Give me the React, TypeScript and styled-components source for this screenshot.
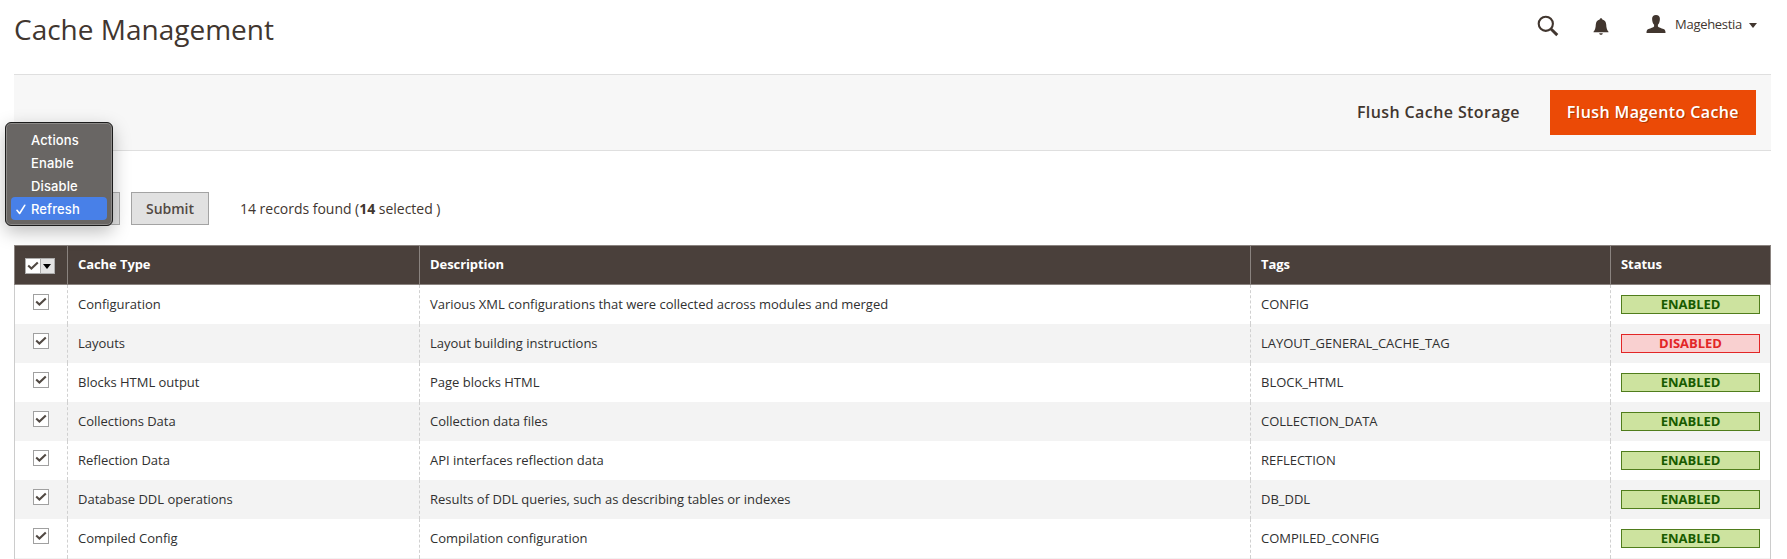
import React from 'react';
import styled, { createGlobalStyle } from 'styled-components';

const GlobalStyle = createGlobalStyle`
  * { box-sizing: border-box; }
  body {
    margin: 0;
    background: #fff;
    color: #41362f;
    font-family: 'Open Sans', 'Noto Sans', sans-serif;
  }
`;

const Page = styled.div`
  height: 559px;
  overflow: hidden;
  padding: 0 16px 0 14px;
`;

const PageHeader = styled.header`
  height: 74px;
  display: flex;
  justify-content: space-between;
  align-items: flex-start;
`;

const Title = styled.h1`
  margin: 10px 0 0;
  font-size: 28px;
  font-weight: 400;
  line-height: 38px;
`;

const HeaderTools = styled.div`
  display: flex;
  align-items: flex-start;
  padding: 14px 14px 0 0;
  color: #41362f;
`;

const SearchIcon = styled.svg`
  margin: 1px 34px 0 0;
`;

const BellIcon = styled.svg`
  margin: 4px 37px 0 0;
`;

const UserIcon = styled.svg`
  margin: 1px 9px 0 0;
`;

const UserName = styled.span`
  font-size: 13px;
  line-height: 20px;
  letter-spacing: -0.3px;
`;

const Caret = styled.svg`
  margin: 9px 0 0 7px;
`;

const ActionBar = styled.div`
  height: 77px;
  display: flex;
  align-items: center;
  justify-content: flex-end;
  padding-right: 15px;
  background: #f7f7f7;
  border-top: 1px solid #dfdfdf;
  border-bottom: 1px solid #dfdfdf;
`;

const ActionButton = styled.button<{ $primary?: boolean }>`
  height: 45px;
  padding: 0 17px 2px;
  margin-left: 13px;
  border: 0;
  font: 600 16px/22px 'Open Sans', sans-serif;
  letter-spacing: 0.4px;
  white-space: nowrap;
  color: ${(p) => (p.$primary ? '#fff' : '#41362f')};
  background: ${(p) => (p.$primary ? '#eb4a06' : 'transparent')};
  text-shadow: ${(p) => (p.$primary ? '1px 1px 0 rgba(0, 0, 0, 0.25)' : 'none')};
`;

const MassActions = styled.div`
  position: relative;
  display: flex;
  align-items: center;
  height: 33px;
  margin: 41px 0 20px;
`;

const SelectBox = styled.div`
  width: 106px;
  height: 33px;
  background: #e1e1e1;
  border: 1px solid #adadad;
`;

const SubmitButton = styled.button`
  width: 78px;
  height: 33px;
  margin-left: 11px;
  padding: 0;
  border: 1px solid #a3a3a3;
  background: #e1e1e1;
  color: #514943;
  font: 600 14px/20px 'Open Sans', sans-serif;
`;

const Records = styled.span`
  margin-left: 31px;
  font-size: 14px;
  line-height: 20px;
  letter-spacing: -0.02px;
`;

const Menu = styled.ul`
  position: absolute;
  z-index: 2;
  left: -9px;
  top: -70px;
  width: 108px;
  height: 104px;
  margin: 0;
  padding: 5px 5px;
  list-style: none;
  background: #696664;
  border: 1px solid #1c1c1c;
  border-radius: 6px;
  box-shadow: inset 0 0 0 1px #8c8a88, 0 6px 18px rgba(0, 0, 0, 0.26);
`;

const MenuItem = styled.li<{ $selected?: boolean }>`
  display: flex;
  align-items: center;
  height: 23px;
  padding: 1px 0 0 5px;
  border-radius: 4px;
  background: ${(p) => (p.$selected ? '#4880e8' : 'transparent')};
  color: #fff;
  font: 500 13px/24px Inter, sans-serif;
  letter-spacing: 0.12px;
`;

const MenuMark = styled.span`
  display: flex;
  width: 15px;
`;

const Grid = styled.div`
  border-left: 1px solid #ccc;
  border-right: 1px solid #ccc;
`;

const columns = '53px 352px 831px 360px 1fr';

const HeadRow = styled.div`
  display: grid;
  grid-template-columns: ${columns};
  height: 40px;
  margin: 0 -1px;
  padding: 0;
  background: #4a403b;
  border: 1px solid #8a837f;
`;

const HeadCell = styled.div`
  display: flex;
  align-items: center;
  padding: 0 0 2px 10px;
  border-right: 1px solid #8a837f;
  color: #fff;
  font-size: 13px;
  font-weight: 700;
  letter-spacing: -0.08px;
  &:last-child { border-right: 0; }
`;

const Row = styled.div<{ $odd: boolean }>`
  display: grid;
  grid-template-columns: ${columns};
  height: 39px;
  background: ${(p) => (p.$odd ? '#f3f3f3' : '#fff')};
`;

const Cell = styled.div`
  display: flex;
  align-items: center;
  padding: 0 10px 2px;
  border-right: 1px dashed #d0d0d0;
  color: #303030;
  font-size: 13px;
  white-space: nowrap;
  letter-spacing: -0.015px;
  &:last-child { border-right: 0; }
`;

const CheckCell = styled(Cell)`
  align-items: flex-start;
  padding: 9px 0 0 18px;
`;

const StatusCell = styled(Cell)`
  align-items: flex-start;
  padding: 10px 10px 0;
`;

const CheckBox = styled.span`
  display: flex;
  align-items: center;
  justify-content: center;
  width: 16px;
  height: 16px;
  border: 1px solid #a0a0a0;
  background: #fff;
`;

const MultiCheck = styled.div`
  display: flex;
  width: 30px;
  height: 16px;
  margin-top: 4px;
  border: 1px solid #adadad;
  background: #fff;
`;

const MultiHalf = styled.span<{ $arrow?: boolean }>`
  display: flex;
  flex: 1;
  align-items: center;
  justify-content: center;
  background: ${(p) => (p.$arrow ? '#e3e3e3' : '#fff')};
  border-left: ${(p) => (p.$arrow ? '1px solid #adadad' : '0')};
`;

const Badge = styled.span<{ $enabled: boolean }>`
  flex: 1;
  height: 19px;
  border: 1px solid ${(p) => (p.$enabled ? '#507d1c' : '#e22626')};
  background: ${(p) => (p.$enabled ? '#cde39f' : '#f9d0d0')};
  color: ${(p) => (p.$enabled ? '#185b00' : '#e22626')};
  font-size: 13px;
  font-weight: 700;
  line-height: 17px;
  text-align: center;
`;

const Tick = () => (
  <svg width="12" height="10" viewBox="0 0 12 10" fill="none">
    <path d="M1.2 4.6 4.4 7.6 10.8 1.4" stroke="#514943" strokeWidth="2.1" />
  </svg>
);

const rows: [string, string, string, boolean][] = [
  ['Configuration', 'Various XML configurations that were collected across modules and merged', 'CONFIG', true],
  ['Layouts', 'Layout building instructions', 'LAYOUT_GENERAL_CACHE_TAG', false],
  ['Blocks HTML output', 'Page blocks HTML', 'BLOCK_HTML', true],
  ['Collections Data', 'Collection data files', 'COLLECTION_DATA', true],
  ['Reflection Data', 'API interfaces reflection data', 'REFLECTION', true],
  ['Database DDL operations', 'Results of DDL queries, such as describing tables or indexes', 'DB_DDL', true],
  ['Compiled Config', 'Compilation configuration', 'COMPILED_CONFIG', true],
];

export default function App() {
  return (
    <Page>
      <GlobalStyle />
      <PageHeader>
        <Title>Cache Management</Title>
        <HeaderTools>
          <SearchIcon width="22" height="22" viewBox="0 0 22 22" fill="none" stroke="currentColor">
            <circle cx="8.8" cy="8.8" r="7.1" strokeWidth="2.1" />
            <path d="M14 14 20.3 20.1" strokeWidth="2.9" />
          </SearchIcon>
          <BellIcon width="16" height="18" viewBox="0 0 16 18" fill="currentColor">
            <path d="M8 0.2c.9 0 1.3.6 1.3 1.4 2.6.7 3.7 2.6 3.9 5 .2 3.3.5 5.2 2.3 7.1v.6H.5v-.6c1.8-1.9 2.1-3.8 2.3-7.1.2-2.4 1.3-4.3 3.9-5 0-.8.4-1.4 1.3-1.4Z" />
            <path d="M6.2 15.2h3.6c-.2 1-.9 1.6-1.8 1.6s-1.6-.6-1.8-1.6Z" />
          </BellIcon>
          <UserIcon width="20" height="18" viewBox="0 0 20 18" fill="currentColor">
            <path d="M10 0c2.5 0 3.9 1.5 3.9 3.8 0 2.6-.7 4.7-2 6v1.6c.8 1.2 3.4 1.6 5.6 2.5 1.6.7 2 1.8 2 4.1H.5c0-2.3.4-3.4 2-4.1 2.2-.9 4.8-1.3 5.6-2.5V9.8c-1.3-1.3-2-3.4-2-6C6.1 1.500 7.5 0 10 0Z" />
          </UserIcon>
          <UserName>Magehestia</UserName>
          <Caret width="8" height="5" viewBox="0 0 8 5" fill="currentColor">
            <path d="M0 0h8L4 5Z" />
          </Caret>
        </HeaderTools>
      </PageHeader>
      <ActionBar>
        <ActionButton>Flush Cache Storage</ActionButton>
        <ActionButton $primary>Flush Magento Cache</ActionButton>
      </ActionBar>
      <MassActions>
        <SelectBox />
        <SubmitButton>Submit</SubmitButton>
        <Records>
          14 records found (<b>14</b> selected )
        </Records>
        <Menu>
          {['Actions', 'Enable', 'Disable', 'Refresh'].map((label) => (
            <MenuItem key={label} $selected={label === 'Refresh'}>
              <MenuMark>
                {label === 'Refresh' && (
                  <svg width="10" height="11" viewBox="0 0 10 11" fill="none">
                    <path d="M1 6.3 3.6 9.5 8.7 1.3" stroke="#fff" strokeWidth="1.6" strokeLinecap="round" strokeLinejoin="round" />
                  </svg>
                )}
              </MenuMark>
              {label}
            </MenuItem>
          ))}
        </Menu>
      </MassActions>
      <Grid>
        <HeadRow>
          <HeadCell>
            <MultiCheck>
              <MultiHalf><Tick /></MultiHalf>
              <MultiHalf $arrow>
                <svg width="8" height="5" viewBox="0 0 8 5"><path d="M0 0h8L4 5Z" fill="#000" /></svg>
              </MultiHalf>
            </MultiCheck>
          </HeadCell>
          <HeadCell>Cache Type</HeadCell>
          <HeadCell>Description</HeadCell>
          <HeadCell>Tags</HeadCell>
          <HeadCell>Status</HeadCell>
        </HeadRow>
        {rows.map(([type, description, tags, enabled], i) => (
          <Row key={type} $odd={i % 2 === 1}>
            <CheckCell><CheckBox><Tick /></CheckBox></CheckCell>
            <Cell>{type}</Cell>
            <Cell>{description}</Cell>
            <Cell>{tags}</Cell>
            <StatusCell><Badge $enabled={enabled}>{enabled ? 'ENABLED' : 'DISABLED'}</Badge></StatusCell>
          </Row>
        ))}
        <Row $odd>
          <Cell /><Cell /><Cell /><Cell /><Cell />
        </Row>
      </Grid>
    </Page>
  );
}
